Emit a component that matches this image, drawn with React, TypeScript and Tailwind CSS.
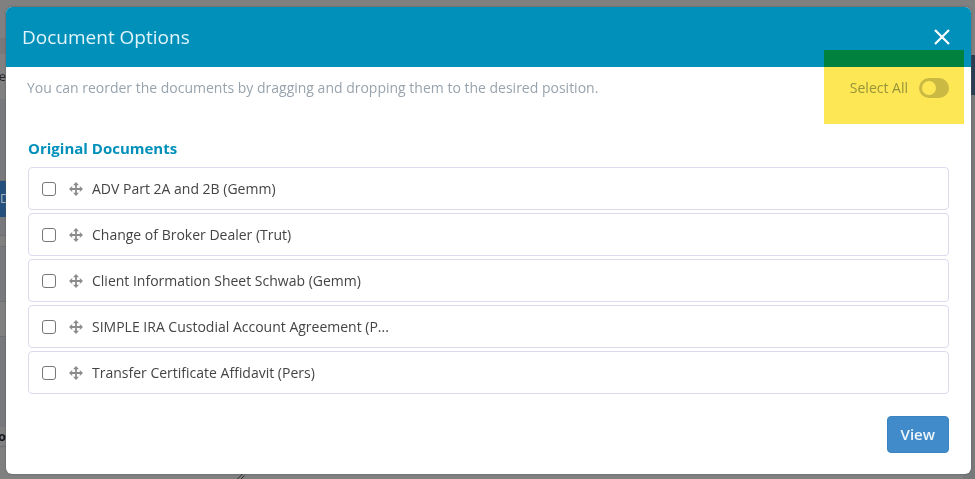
import { useState } from "react";

const documents = [
  { id: "adv", name: "ADV Part 2A and 2B (Gemm)" },
  { id: "broker", name: "Change of Broker Dealer (Trut)" },
  { id: "client", name: "Client Information Sheet Schwab (Gemm)" },
  { id: "simple", name: "SIMPLE IRA Custodial Account Agreement (P..." },
  { id: "transfer", name: "Transfer Certificate Affidavit (Pers)" },
];

const MoveIcon = () => (
  <svg className="ml-[13px] size-[14px] cursor-move text-[#8c8c8c]" viewBox="0 0 14 14" fill="currentColor" aria-hidden="true">
    <path d="M7 0 L10 3.2 H7.9 V6.1 H10.8 V4 L14 7 L10.8 10 V7.9 H7.9 V10.8 H10 L7 14 L4 10.8 H6.1 V7.9 H3.2 V10 L0 7 L3.2 4 V6.1 H6.1 V3.2 H4 Z" />
  </svg>
);

// Dimmed page that stays visible around the dialog
function PageBehind() {
  return (
    <div aria-hidden="true" className="absolute inset-0 flex justify-between overflow-hidden bg-[#808080]">
      <div className="flex w-[6px] flex-col text-[13px] text-[#22252c]">
        <div className="h-[38px]" />
        <div className="h-4 bg-[#79797b]" />
        <div className="flex h-[45px] items-center justify-end">ne</div>
        <div className="h-[82px] border-b border-[#707073] bg-[#78797c]" />
        <div className="flex h-9 items-center bg-[#23507f] text-[#a9b4c0]">D</div>
        <div className="h-[18px] bg-[#78797c]" />
        <div className="h-3 border-y border-[#6e6f72]" />
        <div className="h-[54px] bg-[#78797c]" />
        <div className="h-9 border-y border-[#6e6f72]" />
        <div className="h-[90px] bg-[#78797c]" />
        <div className="flex h-5 items-center justify-end border-b border-[#6e6f72] font-bold text-[#10131c]">o</div>
      </div>
      <div className="flex w-3 flex-col">
        <div className="h-[55px]" />
        <div className="h-10 bg-[#2c3e54]" />
        <div className="grow bg-[#78797b]" />
      </div>
      <svg className="absolute bottom-0 left-[237px] h-[5px] w-2 text-[#2a2a2a]" viewBox="0 0 8 5" fill="none" stroke="currentColor">
        <path d="M0.5 5 L5.5 0 M4 5 L7.5 1.5" />
      </svg>
    </div>
  );
}

export default function App() {
  const [selected, setSelected] = useState<string[]>([]);
  const allSelected = selected.length === documents.length;

  const toggle = (id: string) =>
    setSelected((prev) => (prev.includes(id) ? prev.filter((s) => s !== id) : [...prev, id]));

  return (
    <div className="relative min-h-screen pt-[7px] pr-1 pb-1 pl-[6px] font-['Open_Sans',sans-serif]">
      <PageBehind />
      <div
        role="dialog"
        aria-labelledby="dialog-title"
        className="relative isolate overflow-hidden rounded-md bg-white shadow-[0_0_2px_#555]"
      >
        <header className="flex h-[60px] items-center justify-between bg-[#0090ba] pr-5 pl-4">
          <h1 id="dialog-title" className="text-[19px] text-[#e0f4fa]">
            Document Options
          </h1>
          <button type="button" aria-label="Close" className="text-white">
            <svg className="size-[18px]" viewBox="0 0 18 18" fill="none" stroke="currentColor" strokeWidth="2.2">
              <path d="M2 2 L16 16 M16 2 L2 16" />
            </svg>
          </button>
        </header>

        <div className="flex items-center justify-between pt-[11px] pr-[22px] pl-[21px] text-sm leading-5">
          <p className="text-[#98a3ad]">
            You can reorder the documents by dragging and dropping them to the desired position.
          </p>
          <label className="flex items-center gap-[11px] text-[#98a3ad]">
            Select All
            <input
              type="checkbox"
              role="switch"
              checked={allSelected}
              onChange={() => setSelected(allSelected ? [] : documents.map((d) => d.id))}
              className="h-5 w-[30px] appearance-none rounded-full bg-[#cccccc] p-[3px] before:block before:size-[14px] before:rounded-full before:bg-white checked:bg-[#0090ba] checked:before:ml-auto"
            />
          </label>
        </div>

        <section className="px-[22px] pt-[39px]">
          <h2 className="text-[15px] leading-[22px] font-bold text-[#0090ba]">Original Documents</h2>
          <ul className="mt-2 space-y-[3px]">
            {documents.map((doc) => (
              <li key={doc.id} className="flex h-[43px] items-center rounded border border-[#dcdaee] px-[13px]">
                <input
                  type="checkbox"
                  id={doc.id}
                  checked={selected.includes(doc.id)}
                  onChange={() => toggle(doc.id)}
                  className="size-[14px] appearance-none rounded-[3px] border border-[#767676] bg-white checked:bg-[#0090ba]"
                />
                <MoveIcon />
                <label htmlFor={doc.id} className="ml-[9px] text-sm text-[#444444]">
                  {doc.name}
                </label>
              </li>
            ))}
          </ul>
        </section>

        <footer className="flex justify-end px-[22px] pt-[22px] pb-[21px]">
          <button
            type="button"
            className="h-[37px] rounded border border-[#3b84c3] bg-[#428bca] px-[13px] text-[15px] font-semibold text-[#eef5fb]"
          >
            View
          </button>
        </footer>
      </div>
      {/* highlighter mark over the switch */}
      <div className="pointer-events-none absolute top-[50px] right-[11px] h-[74px] w-[140px] bg-[#fde754] mix-blend-multiply" />
    </div>
  );
}
